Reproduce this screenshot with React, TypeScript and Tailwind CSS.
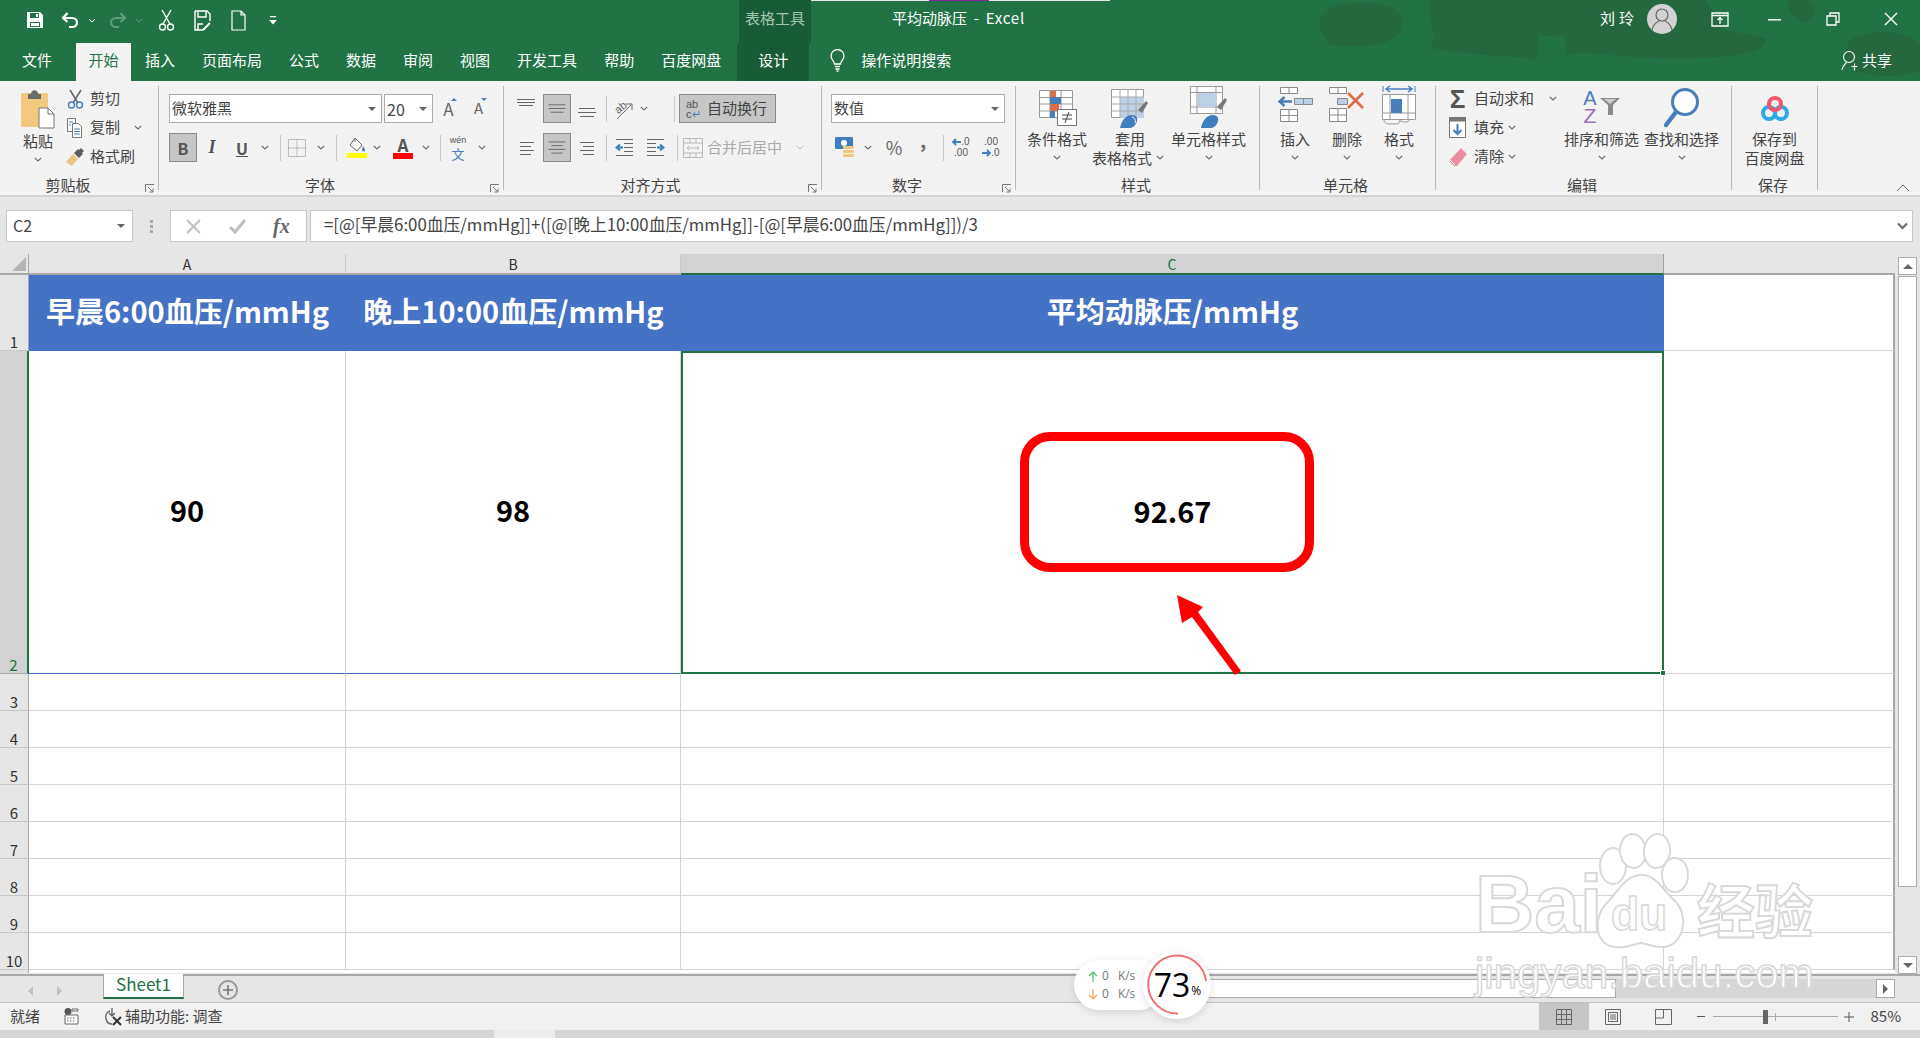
import React from "react";

const F = "font-['Noto_Sans_CJK_SC',sans-serif]";

function Chev({ className = "" }: { className?: string }) {
  return (
    <span className={"flex items-center justify-center " + className}>
      <svg width="8" height="5" viewBox="0 0 8 5" fill="none" stroke="#666" strokeWidth="1.1"><path d="M.8.8 4 4 7.2.8" /></svg>
    </span>
  );
}

function Launcher() {
  return (
    <svg className="absolute right-[3px] bottom-[1px]" width="10" height="10" viewBox="0 0 10 10" fill="none" stroke="#777" strokeWidth="1">
      <path d="M.5 8V.5H9M3 3l5 5M8 4.5V8H4.5" />
    </svg>
  );
}

function Sep() { return <div className="w-px my-[5px] bg-[#b8b8b8] shrink-0" />; }
function MiniSep({ className = "" }: { className?: string }) {
  return <span className={"flex justify-center " + className}><span className="block w-px h-[26px] bg-[#c8c8c8]" /></span>;
}

function Group({ className, label, labelClass, launcher, children }: { className: string; label: string; labelClass: string; launcher?: boolean; children: React.ReactNode }) {
  return (
    <div className={"relative flex flex-col shrink-0 " + className}>
      <div className="h-[95px] flex">{children}</div>
      <div className={"h-[20px] leading-[20px] text-center text-[15px] text-[#444] " + labelClass}>{label}</div>
      {launcher && <Launcher />}
    </div>
  );
}

function Lines({ ls }: { ls: [number, number, number][] }) {
  return (
    <svg width="28" height="29" viewBox="0 0 28 29" stroke="#666" strokeWidth="1">
      {ls.map((l, i) => <line key={i} x1={l[0]} x2={l[1]} y1={l[2] + 0.5} y2={l[2] + 0.5} />)}
    </svg>
  );
}

function Big({ className, icon, l1, l2, chevInline }: { className: string; icon: React.ReactNode; l1: string; l2?: string; chevInline?: boolean }) {
  return (
    <div className={"flex flex-col items-center shrink-0 " + className}>
      <div className="h-[44px] mt-[4px] flex items-start justify-center">{icon}</div>
      <div className="h-[19px] leading-[19px] text-[15px] text-[#444] whitespace-nowrap">{l1}</div>
      {l2 ? (
        <div className="h-[19px] leading-[19px] text-[15px] text-[#444] whitespace-nowrap flex items-center">{l2}{chevInline && <Chev className="w-[16px]" />}</div>
      ) : (
        <Chev className="h-[19px] w-[16px]" />
      )}
    </div>
  );
}

function SmallRow({ icon, text, chev, iconBox }: { icon: React.ReactNode; text: string; chev?: string; iconBox: string }) {
  return (
    <div className="h-[29px] flex items-center">
      <span className={"flex items-center justify-center shrink-0 " + iconBox}>{icon}</span>
      <span className="text-[15px] text-[#444] whitespace-nowrap">{text}</span>
      {chev && <Chev className={chev} />}
    </div>
  );
}

function ColorScissors() {
  return (
    <svg width="17" height="20" viewBox="0 0 17 20" fill="none">
      <path d="M3 1l8 13M14 1 6 14" stroke="#6b6b6b" strokeWidth="1.6" />
      <circle cx="4.5" cy="16" r="3" stroke="#4a7ebb" strokeWidth="1.4" />
      <circle cx="12.5" cy="16" r="3" stroke="#4a7ebb" strokeWidth="1.4" />
    </svg>
  );
}
function CopyIcon() {
  return (
    <svg width="18" height="20" viewBox="0 0 18 20" fill="#fff" stroke="#777">
      <path d="M1.5.5h8v13h-8z" /><path d="M6.5 5.5h6l3 3v11h-9z" />
      <path d="M3 4h4M3 7h2M8 11h6M8 13.5h6M8 16h6" stroke="#4a7ebb" fill="none" />
    </svg>
  );
}
function BrushIcon() {
  return (
    <svg width="20" height="20" viewBox="0 0 20 20">
      <path d="M1 15 8 7l5 5-6 7z" fill="#e8c48a" />
      <path d="M9 6l4-4 1 1 2-2 3 3-2 2 1 1-4 4z" fill="#5f5f5f" />
    </svg>
  );
}

function TitleBlobs() {
  return (
    <svg className="absolute left-0 top-0 pointer-events-none" width="1920" height="81" viewBox="0 0 1920 81" fill="#25683f">
      <path d="M1322 15c8-12 30-13 50-12 22 0 32 10 30 22-2 12-14 18-30 20-16 2-30 2-42 0-6-8-14-18-8-30z" />
      <path d="M1430 0h107c2 12 2 30 0 60-22-4-34-3-60-6-18-2-38-2-47-8 6-8 4-12 2-20-2-10-2-18-2-26z" />
      <path d="M1510 0h60c-2 14 2 30-4 36-20 2-40-4-56-6z" />
      <path d="M1566 0h140l20 30 40 8c2 6-6 14-30 17-40 6-90 4-125 0-18-2-30-2-45-1-2-18-2-34 0-54z" />
      <path d="M1790 0h20c10 10 6 20-6 22-10-4-20-14-14-22zM1846 50c2-14 18-18 36-18 18 0 32 6 38 12v26c-20 10-60 6-68-2-6-6-8-12-6-18z" />
    </svg>
  );
}

function Titlebar() {
  return (
    <div className="relative h-[81px] bg-[#217346] text-white shrink-0 overflow-hidden">
      <TitleBlobs />
      <div className="absolute left-[810px] top-0 w-[300px] h-px bg-[#e8e8e8]" />
      <div className="absolute left-[929px] top-0 w-[60px] h-px bg-[#7b2b9c]" />
      <div className="relative h-[43px] flex">
        <div className="flex items-center h-[40px] pl-[26px]">
          <svg width="18" height="18" viewBox="0 0 18 18" fill="#fff"><path d="M1 1h13l3 3v13H1z" /><path d="M4 2h9v5H4zM4 11h10v5H4z" fill="#217346" /><path d="M10 3h2v3h-2zM5 12h8v3H5z" fill="#fff" /></svg>
          <svg className="ml-[17px]" width="18" height="16" viewBox="0 0 18 16" fill="none" stroke="#fff" strokeWidth="2.2"><path d="M2 6h9c3 0 5 2 5 4.500S14 15 11 15H8" /><path d="M6.500 1 2 6l4.500 4" /></svg>
          <svg className="ml-[9px]" width="8" height="5" viewBox="0 0 8 5" fill="none" stroke="#fff"><path d="M1 1l3 3 3-3" /></svg>
          <svg className="ml-[13px]" width="18" height="16" viewBox="0 0 18 16" fill="none" stroke="#5e9c7d" strokeWidth="2.2"><path d="M16 6H7c-3 0-5 2-5 4.500S4 15 7 15h3" /><path d="M11.500 1 16 6l-4.500 4" /></svg>
          <svg className="ml-[8px]" width="8" height="5" viewBox="0 0 8 5" fill="none" stroke="#5e9c7d"><path d="M1 1l3 3 3-3" /></svg>
          <svg className="ml-[15px]" width="17" height="22" viewBox="0 0 17 22" fill="none" stroke="#fff" strokeWidth="1.4"><path d="M4 1l8 14M13 1 5 15" /><circle cx="4.500" cy="18" r="3" /><circle cx="12.500" cy="18" r="3" /></svg>
          <svg className="ml-[19px]" width="17" height="21" viewBox="0 0 17 21" fill="none" stroke="#fff" strokeWidth="1.4"><path d="M1 1h12l3 3v7M9 20H1V1M4 2v5h8V2M4 20v-6h5" /><path d="M9 20l7-7" strokeWidth="2" /></svg>
          <svg className="ml-[20px]" width="15" height="21" viewBox="0 0 15 21" fill="none" stroke="#fff" strokeWidth="1.2"><path d="M1 1h9l4 4v15H1zM10 1v4h4" /></svg>
          <svg className="ml-[23px]" width="8" height="9" viewBox="0 0 8 9" fill="#fff"><path d="M1 0h6v1.300H1zM0 4h8L4 8.500z" /></svg>
        </div>
        <div className="ml-[462px] w-[72px] bg-[#185c37] flex items-start justify-center pt-[8px] text-[15px] leading-[20px] text-[#a3c7b3]">表格工具</div>
        <div className="ml-[81px] pt-[8px] text-[15px] leading-[20px] whitespace-pre">平均动脉压  -  <span className="tracking-[0.8px]">Excel</span></div>
        <div className="ml-auto flex items-start">
          <span className="text-[15px] leading-[20px] pt-[8px] tracking-[4px]">刘玲</span>
          <span className="ml-[9px] mt-[4px] w-[30px] h-[30px] rounded-full bg-[#d2d2d2] flex items-center justify-center">
            <svg width="22" height="24" viewBox="0 0 22 24" fill="none" stroke="#666" strokeWidth="1.2"><circle cx="11" cy="8" r="6" /><path d="M1 23c1-6 5-8 7-9M21 23c-1-6-5-8-7-9" /></svg>
          </span>
          <svg className="ml-[34px] mt-[12px]" width="18" height="15" viewBox="0 0 18 15" fill="none" stroke="#fff" strokeWidth="1.300"><path d="M1 1h16v13H1zM1 3.500h16M9 12V6M6.500 8 9 5.500 11.500 8" /></svg>
          <svg className="ml-[39px] mt-[19px]" width="13" height="2" viewBox="0 0 13 2" fill="#fff"><path d="M0 0h13v1.500H0z" /></svg>
          <svg className="ml-[45px] mt-[12px]" width="14" height="14" viewBox="0 0 14 14" fill="none" stroke="#fff" strokeWidth="1.300"><path d="M1 4h9v9H1zM4 4V1h9v9h-3" /></svg>
          <svg className="ml-[44px] mr-[22px] mt-[12px]" width="14" height="14" viewBox="0 0 14 14" fill="none" stroke="#fff" strokeWidth="1.400"><path d="M1 1l12 12M13 1 1 13" /></svg>
        </div>
      </div>
      <div className="relative h-[38px] flex items-stretch text-[15px]">
        <div className="pl-[22px] pb-[3px] flex items-center whitespace-nowrap">文件</div>
        <div className="ml-[24px] w-[55px] pb-[3px] bg-[#f3f3f3] text-[#217346] flex items-center justify-center">开始</div>
        <div className="ml-[14px] pb-[3px] flex items-center">插入</div>
        <div className="ml-[27px] pb-[3px] flex items-center">页面布局</div>
        <div className="ml-[27px] pb-[3px] flex items-center">公式</div>
        <div className="ml-[27px] pb-[3px] flex items-center">数据</div>
        <div className="ml-[27px] pb-[3px] flex items-center">审阅</div>
        <div className="ml-[27px] pb-[3px] flex items-center">视图</div>
        <div className="ml-[27px] pb-[3px] flex items-center">开发工具</div>
        <div className="ml-[27px] pb-[3px] flex items-center">帮助</div>
        <div className="ml-[27px] pb-[3px] flex items-center">百度网盘</div>
        <div className="ml-[16px] w-[72px] pb-[3px] bg-[#185c37] flex items-center justify-center">设计</div>
        <div className="ml-[21px] pb-[3px] flex items-center">
          <svg width="15" height="23" viewBox="0 0 15 23" fill="none" stroke="#fff" strokeWidth="1.3"><path d="M4.500 15c0-3-3.500-4-3.500-8a6.500 6.500 0 0 1 13 0c0 4-3.500 5-3.500 8zM5 17.500h5M5.500 20h4M6.500 22h2" /></svg>
        </div>
        <div className="ml-[16px] pb-[3px] flex items-center">操作说明搜索</div>
        <div className="ml-auto mr-[28px] pb-[3px] flex items-center">
          <svg className="mr-[4px]" width="17" height="22" viewBox="0 0 17 22" fill="none" stroke="#fff" strokeWidth="1.100"><circle cx="8" cy="7" r="5.500" /><path d="M1 20c.5-4 3-6 4.500-7.500M10.500 16.500h6M13.500 13.500v7" /></svg>
          共享
        </div>
      </div>
    </div>
  );
}

function ClipboardG() {
  return (
    <Group className="w-[158px]" label="剪贴板" labelClass="pr-[22px]" launcher>
      <div className="w-[63px] pl-[13px] flex flex-col items-center">
        <svg className="mt-[8px]" width="36" height="40" viewBox="0 0 36 40">
          <rect x="1" y="4" width="27" height="34" rx="1" fill="#f0c97f" />
          <path d="M8 5h3c0-5 7-5 7 0h3v5H8z" fill="#6b6b6b" />
          <path d="M19 19h9l6 6v14H19z" fill="#fff" stroke="#777" />
          <path d="M28 19v6h6" fill="none" stroke="#777" />
        </svg>
        <span className="text-[15px] leading-[19px] text-[#444] mt-[2px]">粘贴</span>
        <Chev className="h-[19px] w-[16px]" />
      </div>
      <div className="pt-[3px]">
        <SmallRow icon={<ColorScissors />} text="剪切" iconBox="w-[24px] mr-[3px]" />
        <SmallRow icon={<CopyIcon />} text="复制" iconBox="w-[24px] mr-[3px]" chev="w-[8px] ml-[14px]" />
        <SmallRow icon={<BrushIcon />} text="格式刷" iconBox="w-[24px] mr-[3px]" />
      </div>
    </Group>
  );
}

function FontG() {
  return (
    <Group className="w-[344px] pl-[10px]" label="字体" labelClass="pr-[32px]" launcher>
      <div className="pt-[13px] flex flex-col gap-[10px] text-[#444]">
        <div className="h-[29px] flex">
          <div className="w-[213px] bg-white border border-[#ababab] flex items-center pl-[2px] pr-[5px] text-[15px] justify-between">微软雅黑<span className="w-0 h-0 border-x-[4px] border-x-transparent border-t-[4px] border-t-[#666]" /></div>
          <div className="w-[49px] ml-[2px] bg-white border border-[#ababab] flex items-center pl-[2px] pr-[5px] text-[16px] justify-between">20<span className="w-0 h-0 border-x-[4px] border-x-transparent border-t-[4px] border-t-[#666]" /></div>
          <div className="w-[29px] ml-px relative flex items-center justify-center text-[17px] text-[#666]">A<span className="absolute top-[4px] right-[6px] w-0 h-0 border-x-[3px] border-x-transparent border-b-[3px] border-b-[#4a7ebb]" /></div>
          <div className="w-[29px] ml-px relative flex items-center justify-center text-[15px] text-[#666]">A<span className="absolute top-[4px] right-[6px] w-0 h-0 border-x-[3px] border-x-transparent border-t-[3px] border-t-[#4a7ebb]" /></div>
        </div>
        <div className="h-[29px] flex items-center">
          <div className="w-[28px] h-[29px] bg-[#c6c6c6] border border-[#8a8a8a] flex items-center justify-center font-bold text-[16px] text-[#555]">B</div>
          <div className="w-[30px] flex justify-center font-bold italic text-[18px] text-[#555] font-['Liberation_Serif',serif]">I</div>
          <div className="w-[30px] flex justify-center font-bold underline text-[16px] text-[#555]">U</div>
          <Chev className="w-[16px]" />
          <MiniSep className="w-[14px]" />
          <div className="w-[20px] flex justify-center">
            <svg width="18" height="18" viewBox="0 0 18 18" fill="none" stroke="#888" strokeDasharray="1 1"><path d="M.5.500h17v17H.5zM.5 9h17M9 .500v17" /></svg>
          </div>
          <Chev className="w-[16px] ml-[6px]" />
          <MiniSep className="w-[14px]" />
          <div className="w-[28px] flex flex-col items-center">
            <svg width="18" height="16" viewBox="0 0 18 16" fill="none" stroke="#666"><path d="M7 1l7 7-5 6-7-6z" fill="#fff" /><path d="M7 1V5" /><path d="M15 9c1 2 2 3 2 4a1.500 1.500 0 0 1-3 0c0-1 .5-2 1-4z" fill="#4a7ebb" stroke="none" /></svg>
            <span className="block w-[20px] h-[5px] bg-[#ffff00]" />
          </div>
          <Chev className="w-[12px]" />
          <div className="w-[28px] ml-[6px] flex flex-col items-center">
            <span className="text-[17px] leading-[16px] text-[#555] font-bold">A</span>
            <span className="block w-[20px] h-[6px] bg-[#ff0000]" />
          </div>
          <Chev className="w-[14px] ml-[2px]" />
          <MiniSep className="w-[14px]" />
          <div className="w-[22px] flex flex-col items-center text-[#4a7ebb] font-['Liberation_Sans',sans-serif]">
            <span className="text-[9px] leading-[11px] text-[#555]">wén</span>
            <span className="text-[13px] leading-[15px] font-['Noto_Sans_CJK_SC',sans-serif]">文</span>
          </div>
          <Chev className="w-[16px] ml-[5px]" />
        </div>
      </div>
    </Group>
  );
}

function ActiveBtn({ children, className = "" }: { children: React.ReactNode; className?: string }) {
  return <div className={"h-[29px] bg-[#c6c6c6] border border-[#8a8a8a] flex items-center justify-center " + className}>{children}</div>;
}

function Indent({ flip }: { flip?: boolean }) {
  return (
    <svg width="19" height="18" viewBox="0 0 19 18" fill="none" stroke="#666" style={flip ? { transform: "scaleX(-1)" } : undefined}>
      <path d="M1 .5h17M9 4.500h9M9 8.500h9M9 12.500h9M1 16.500h17" />
      <path d="M8 8.500H2M5 5.500l-3.500 3L5 11.500" stroke="#3f7fbf" strokeWidth="2" />
    </svg>
  );
}

function AlignG() {
  return (
    <Group className="w-[317px] pl-[9px]" label="对齐方式" labelClass="pr-[33px]" launcher>
      <div className="pt-[13px] flex flex-col gap-[10px] text-[#444]">
        <div className="h-[29px] flex items-center">
          <span className="w-[28px] block"><Lines ls={[[4, 22, 5], [4, 22, 8], [6, 20, 11]]} /></span>
          <ActiveBtn className="w-[28px] ml-[2px]"><Lines ls={[[5, 23, 10], [5, 23, 14], [7, 21, 18]]} /></ActiveBtn>
          <span className="w-[28px] ml-[2px] block"><Lines ls={[[6, 22, 14], [5, 23, 18], [7, 21, 22]]} /></span>
          <MiniSep className="w-[10px]" />
          <span className="w-[24px] flex justify-center">
            <svg className="overflow-visible" width="20" height="22" viewBox="0 0 20 22" fill="none"><path d="M4 21 18 7M13 6h6v6" stroke="#666" /><text x="2" y="13" fontSize="11" fill="#666" transform="rotate(-40 8 10)" fontFamily="Liberation Sans">ab</text></svg>
          </span>
          <Chev className="w-[14px] ml-[2px]" />
          <MiniSep className="w-[10px] ml-[18px]" />
          <ActiveBtn className="w-[97px] !justify-start pl-[6px]">
            <span className="w-[16px] flex flex-col text-[11px] text-[#555] font-['Liberation_Sans',sans-serif]"><span className="leading-[10px]">ab</span><span className="leading-[10px]">c<span className="text-[#4a7ebb]">↵</span></span></span>
            <span className="ml-[5px] text-[15px] whitespace-nowrap">自动换行</span>
          </ActiveBtn>
        </div>
        <div className="h-[29px] flex items-center">
          <span className="w-[28px] block"><Lines ls={[[7, 21, 9], [7, 18, 13], [7, 21, 17], [7, 18, 21]]} /></span>
          <ActiveBtn className="w-[28px] ml-[2px]"><Lines ls={[[5, 23, 8], [8, 20, 12], [5, 23, 16], [8, 20, 20]]} /></ActiveBtn>
          <span className="w-[28px] ml-[2px] block"><Lines ls={[[7, 21, 9], [10, 21, 13], [7, 21, 17], [10, 21, 21]]} /></span>
          <MiniSep className="w-[10px]" />
          <span className="w-[27px] flex justify-center"><Indent /></span>
          <span className="w-[28px] ml-[3px] flex justify-center"><Indent flip /></span>
          <MiniSep className="w-[10px] ml-[3px]" />
          <svg className="ml-px" width="20" height="20" viewBox="0 0 20 20" fill="#f3f3f3" stroke="#bbb"><path d="M.5.500h19v19H.5zM.5 5h19M.5 15h19M7 .500V5M13 .500V5M7 15v4.500M13 15v4.500" /><path d="M4 10h12M6 8l-2 2 2 2M14 8l2 2-2 2" fill="none" /></svg>
          <span className="ml-[4px] text-[15px] text-[#aaa] whitespace-nowrap">合并后居中</span>
          <svg className="ml-[14px]" width="8" height="5" viewBox="0 0 8 5" fill="none" stroke="#bbb"><path d="M.8.8 4 4 7.2.8" /></svg>
        </div>
      </div>
    </Group>
  );
}

function DecIcon({ inc }: { inc?: boolean }) {
  return (
    <span className="w-[26px] flex flex-col items-center text-[10px] leading-[10px] text-[#555] font-['Liberation_Sans',sans-serif]">
      <span className="flex items-center h-[11px]">{!inc && <svg width="9" height="8" viewBox="0 0 9 8" fill="none" stroke="#3f7fbf" strokeWidth="1.800"><path d="M9 4H1M4 1 1 4l3 3" /></svg>}{inc ? ".00" : ".0"}</span>
      <span className="flex items-center h-[11px]">{inc && <svg width="9" height="8" viewBox="0 0 9 8" fill="none" stroke="#3f7fbf" strokeWidth="1.800"><path d="M0 4h8M5 1l3 3-3 3" /></svg>}{inc ? ".0" : ".00"}</span>
    </span>
  );
}

function NumberG() {
  return (
    <Group className="w-[193px] pl-[9px]" label="数字" labelClass="pr-[32px]" launcher>
      <div className="pt-[13px] flex flex-col gap-[10px] text-[#444]">
        <div className="w-[174px] h-[29px] bg-white border border-[#ababab] flex items-center justify-between pl-[2px] pr-[5px] text-[15px]">数值<span className="w-0 h-0 border-x-[4px] border-x-transparent border-t-[4px] border-t-[#666]" /></div>
        <div className="h-[29px] flex items-center">
          <span className="w-[28px] flex justify-center">
            <svg width="20" height="21" viewBox="0 0 20 21"><rect x="0" y="0" width="18" height="12" rx="1" fill="#3f7fbf" /><circle cx="9" cy="6" r="3" fill="#fff" /><rect x="8" y="9" width="11" height="3" rx="1" fill="#f0c97f" /><rect x="8" y="13" width="11" height="3" rx="1" fill="#f0c97f" /><rect x="8" y="17" width="11" height="3" rx="1" fill="#f0c97f" /></svg>
          </span>
          <Chev className="w-[16px] ml-px" />
          <span className="w-[28px] ml-[4px] text-center text-[18px] text-[#666]">%</span>
          <span className="w-[28px] ml-px text-center text-[19px] font-bold leading-[14px] text-[#666] pb-[16px]">,</span>
          <MiniSep className="w-[10px] ml-px" />
          <DecIcon />
          <span className="ml-[4px]"><DecIcon inc /></span>
        </div>
      </div>
    </Group>
  );
}

function CondIcon() {
  return (
    <svg className="mt-[5px] ml-[2px]" width="38" height="36" viewBox="0 0 38 36">
      <path d="M.5.500h33v27H.5zM.5 7.500h33M.5 14h33M.5 21h33M11 .500v27M22 .500v27" fill="#fff" stroke="#999" />
      <path d="M11 1h6v6h-6zM11 14h9v7h-9z" fill="#dd6b47" />
      <path d="M11 7h11v7H11zM11 21h5v7h-5z" fill="#4a7ebb" />
      <rect x="18.500" y="19.500" width="19" height="16" fill="#fff" stroke="#777" />
      <path d="M23 25h10M23 29h10M30 22l-4 11" stroke="#444" fill="none" />
    </svg>
  );
}
function TableStyleIcon() {
  return (
    <svg className="mt-[4px]" width="38" height="40" viewBox="0 0 38 40">
      <path d="M.5.500h32v28H.5z" fill="#fff" stroke="#999" />
      <path d="M9 8h24v21H9z" fill="#bcd0e6" />
      <path d="M.5 8h32M.5 15h32M.5 22h32M9 .500v28M17 .500v28M25 .500v28" stroke="#aaa" fill="none" />
      <path d="M27 21l8-9 2 2-6 10z" fill="#777" />
      <path d="M9 39c1-6 5-13 12-13 4 0 6 3 5 6-1 4-4 7-7 7z" fill="#3f7fbf" />
      <path d="M21 28c3 1 4 3 3 6" fill="none" stroke="#fff" />
    </svg>
  );
}
function CellStyleIcon() {
  return (
    <svg className="mt-[1px]" width="38" height="43" viewBox="0 0 38 43">
      <path d="M.5.500h32v27H.5zM.5 6.500h32M7 .500v27M26 .500v27M.5 21h32" fill="#fff" stroke="#999" />
      <path d="M7.500 7h18v14h-18z" fill="#bcd0e6" />
      <path d="M27 21l8-9 2 2-6 10z" fill="#777" />
      <path d="M11 42c1-6 5-13 12-13 4 0 6 3 5 6-1 4-4 7-7 7z" fill="#3f7fbf" />
    </svg>
  );
}
function InsertIcon() {
  return (
    <svg className="mt-[2px]" width="36" height="36" viewBox="0 0 36 36" fill="#fff" stroke="#888">
      <path d="M3.500.500h17v6h-17zM12 .500v6M3.500 22.500h17v12h-17zM3.500 28.500h17M12 22.500v12" />
      <path d="M17.500 11.500h18v6h-18zM26.500 11.500v6" fill="#bcd0e6" />
      <path d="M15 14.500H3M7.500 10l-5 4.500 5 4.500" stroke="#4a7ebb" strokeWidth="2.400" fill="none" />
    </svg>
  );
}
function DeleteIcon() {
  return (
    <svg className="mt-[2px]" width="36" height="36" viewBox="0 0 36 36" fill="#fff" stroke="#888">
      <path d="M.5.500h17v6H.5zM9 .500v6M.5 21.500h17v13H.5zM.5 28h17M9 21.500v13" />
      <path d="M8.500 11.500h10v6h-10z" fill="#bcd0e6" />
      <path d="M19 6l15 15M34 6 19 21" stroke="#dd6b47" strokeWidth="2.600" fill="none" />
    </svg>
  );
}
function FormatIcon() {
  return (
    <svg width="34" height="40" viewBox="0 0 34 40" fill="#fff" stroke="#999">
      <path d="M1 1v6M33 1v6" stroke="#4a7ebb" fill="none" />
      <path d="M4 4h26M8 1 4 4l4 3M26 1l4 3-4 3" stroke="#4a7ebb" strokeWidth="1.500" fill="none" />
      <path d="M.5 9.500h33v25H.5zM8 9.500v25M26 9.500v25M.5 28h33" />
      <path d="M9 14h11v14H9z" fill="#4a7ebb" stroke="none" />
      <path d="M2 35c0 4 5 4 7 4h5c3 0 4-2 4-4M18 35c0 2 4 2 6 2 2 0 3-1 3-2" fill="none" />
    </svg>
  );
}

function SortIcon() {
  return (
    <div className="flex items-start mt-[5px]">
      <span className="flex flex-col items-center font-medium font-['Liberation_Sans',sans-serif]">
        <span className="text-[#4a7ebb] text-[20px] leading-[17px]">A</span>
        <span className="text-[#9a6fb8] text-[21px] leading-[17px]">Z</span>
      </span>
      <svg className="ml-[3px] mt-[8px]" width="20" height="17" viewBox="0 0 20 17"><path d="M0 0h20l-7 7v10H8V7z" fill="#8a8a8a" /><path d="M4 1h12L10 6z" fill="#cfcfcf" /></svg>
    </div>
  );
}
function FindIcon() {
  return (
    <svg className="mt-[2px]" width="36" height="42" viewBox="0 0 36 42" fill="none">
      <circle cx="21" cy="15" r="12.500" stroke="#4a7ebb" strokeWidth="3" fill="#fff" />
      <path d="M12 25 2 38" stroke="#4a7ebb" strokeWidth="4.500" strokeLinecap="round" />
    </svg>
  );
}
function PanIcon() {
  return (
    <svg className="mt-[11px]" width="28" height="26" viewBox="0 0 28 26" fill="none" strokeWidth="4">
      <circle cx="8" cy="17" r="6" stroke="#2ea9e8" />
      <circle cx="20" cy="17" r="6" stroke="#2ea9e8" />
      <circle cx="14" cy="8" r="6" stroke="#f1566d" />
    </svg>
  );
}

function Ribbon() {
  return (
    <div className={"h-[116px] bg-[#f3f3f3] border-b-2 border-[#d4d4d4] flex shrink-0 relative"}>
      <ClipboardG /><Sep />
      <FontG /><Sep />
      <AlignG /><Sep />
      <NumberG /><Sep />
      <Group className="w-[243px] pl-[11px]" label="样式" labelClass="pr-[14px]">
        <Big className="w-[60px]" icon={<CondIcon />} l1="条件格式" />
        <Big className="w-[76px] ml-[5px]" icon={<TableStyleIcon />} l1="套用" l2="表格格式" chevInline />
        <Big className="w-[75px] ml-[3px]" icon={<CellStyleIcon />} l1="单元格样式" />
      </Group>
      <Sep />
      <Group className="w-[175px] pl-[9px]" label="单元格" labelClass="pr-[13px]">
        <Big className="w-[52px]" icon={<InsertIcon />} l1="插入" />
        <Big className="w-[52px]" icon={<DeleteIcon />} l1="删除" />
        <Big className="w-[52px]" icon={<FormatIcon />} l1="格式" />
      </Group>
      <Sep />
      <Group className="w-[295px] pl-[9px]" label="编辑" labelClass="pr-[12px]">
        <div className="w-[119px] pt-[3px]">
          <SmallRow icon={<span className="text-[26px] leading-none text-[#555] font-bold font-['Liberation_Sans',sans-serif]">Σ</span>} text="自动求和" iconBox="w-[25px] mr-[4px]" chev="w-[8px] ml-[15px]" />
          <SmallRow icon={<svg width="17" height="21" viewBox="0 0 17 21" fill="#fff" stroke="#777"><path d="M.5.500h16v20H.5z" /><path d="M0 0h17v4H0z" fill="#777" /><path d="M8.500 7v10M4.500 13l4 4 4-4" stroke="#3f7fbf" strokeWidth="2" fill="none" /></svg>} text="填充" iconBox="w-[25px] mr-[4px]" chev="w-[8px] ml-[4px]" />
          <SmallRow icon={<svg width="18" height="18" viewBox="0 0 18 18"><path d="M12 0l6 6-10 12H5l-5-5z" fill="#ea8f9f" /><path d="M1 12l5 5" stroke="#fff" /></svg>} text="清除" iconBox="w-[25px] mr-[4px]" chev="w-[8px] ml-[4px]" />
        </div>
        <Big className="w-[75px]" icon={<SortIcon />} l1="排序和筛选" />
        <Big className="w-[75px] ml-[5px]" icon={<FindIcon />} l1="查找和选择" />
      </Group>
      <Sep />
      <Group className="w-[85px]" label="保存" labelClass="pr-[3px]">
        <Big className="w-[85px]" icon={<PanIcon />} l1="保存到" l2="百度网盘" />
      </Group>
      <Sep />
      <svg className="absolute right-[10px] bottom-[3px]" width="14" height="8" viewBox="0 0 14 8" fill="none" stroke="#666"><path d="M1 7l6-6 6 6" /></svg>
    </div>
  );
}

function FormulaBar() {
  return (
    <div className="h-[57px] bg-[#e6e6e6] pt-[13px] pl-[6px] pr-[7px] flex shrink-0">
      <div className="w-[127px] h-[32px] bg-white border border-[#c6c6c6] flex items-center justify-between pl-[6px] pr-[7px] text-[16px] text-[#444]"><span className="pb-[2px]">C2</span><span className="w-0 h-0 border-x-[4px] border-x-transparent border-t-[4px] border-t-[#666]" /></div>
      <div className="w-[37px] h-[32px] flex flex-col items-center justify-center gap-[2px]">
        <span className="block w-[3px] h-[3px] bg-[#aaa]" /><span className="block w-[3px] h-[3px] bg-[#aaa]" /><span className="block w-[3px] h-[3px] bg-[#aaa]" />
      </div>
      <div className="w-[137px] h-[32px] bg-white border border-[#c6c6c6] flex items-center">
        <svg className="ml-[15px]" width="15" height="15" viewBox="0 0 15 15" fill="none" stroke="#c0c0c0" strokeWidth="2"><path d="M1 1l13 13M14 1 1 14" /></svg>
        <svg className="ml-[28px]" width="17" height="15" viewBox="0 0 17 15" fill="none" stroke="#c0c0c0" strokeWidth="3"><path d="M1 8l5 5L16 1" /></svg>
        <span className="ml-[27px] italic font-bold text-[20px] text-[#666] font-['Liberation_Serif',serif]">fx</span>
      </div>
      <div className="ml-[3px] flex-1 h-[32px] bg-white border border-[#c6c6c6] flex items-center justify-between pl-[13px] pr-[4px] text-[16.8px] text-[#444]">
        <span className="whitespace-nowrap pb-[2px]">=[@[早晨6:00血压/mmHg]]+([@[晚上10:00血压/mmHg]]-[@[早晨6:00血压/mmHg]])/3</span>
        <svg width="11" height="8" viewBox="0 0 11 8" fill="none" stroke="#666" strokeWidth="2"><path d="M1 1.500 5.500 6 10 1.500" /></svg>
      </div>
    </div>
  );
}

const rowNums = [3, 4, 5, 6, 7, 8, 9, 10];

function ColHead({ t, sel }: { t: string; sel?: boolean }) {
  return (
    <div className={sel
      ? "bg-[#d2d2d2] border-b-2 border-[#217346] border-r border-r-[#9f9f9f] text-[#217346] text-[14px] leading-[18px] flex items-end justify-center"
      : "bg-[#e6e6e6] border-b-2 border-[#a8a8a8] border-r border-r-[#c8c8c8] text-[#333] text-[14px] leading-[18px] flex items-end justify-center"}>{t}</div>
  );
}
function RowHead({ t, sel }: { t: number; sel?: boolean }) {
  return (
    <div className={sel
      ? "bg-[#d2d2d2] border-r-2 border-[#217346] border-b border-b-[#a8a8a8] text-[15px] leading-[16px] text-[#217346] flex items-end justify-center"
      : "bg-[#e6e6e6] border-r border-[#a8a8a8] border-b border-b-[#c8c8c8] text-[15px] leading-[16px] text-[#333] flex items-end justify-center"}>{t}</div>
  );
}

function Sheet() {
  const blank = "bg-white border-r border-b border-[#d4d4d4]";
  return (
    <div className="h-[720px] flex shrink-0 bg-[#e6e6e6]">
      <div className="w-[1895px] grid grid-cols-[29px_317px_335px_983px_231px] grid-rows-[21px_76px_323px_repeat(8,37px)_3px]">
        <div className="bg-[#e6e6e6] border-b-2 border-r border-[#a8a8a8] flex items-end justify-end">
          <span className="w-0 h-0 border-l-[14px] border-l-transparent border-b-[14px] border-b-[#b5b5b5] mr-[2px] mb-[2px]" />
        </div>
        <ColHead t="A" /><ColHead t="B" /><ColHead t="C" sel />
        <div className="border-b-2 border-[#a8a8a8]" />

        <RowHead t={1} />
        <div className="bg-[#4472c4] text-white font-bold text-[29px] pb-[4px] flex items-center justify-center whitespace-nowrap">早晨6:00血压/mmHg</div>
        <div className="bg-[#4472c4] text-white font-bold text-[29px] pb-[4px] flex items-center justify-center whitespace-nowrap">晚上10:00血压/mmHg</div>
        <div className="bg-[#4472c4] text-white font-bold text-[29px] pb-[4px] flex items-center justify-center whitespace-nowrap">平均动脉压/mmHg</div>
        <div className={blank + " border-r-2 border-r-[#a8a8a8]"} />

        <RowHead t={2} sel />
        <div className="bg-white border-r border-r-[#d4d4d4] border-b border-b-[#4472c4] font-bold text-[29px] text-black pb-[4px] flex items-center justify-center">90</div>
        <div className="bg-white border-r border-r-[#d4d4d4] border-b border-b-[#4472c4] font-bold text-[29px] text-black pb-[4px] flex items-center justify-center">98</div>
        <div className="relative bg-white border-2 border-[#217346] font-bold text-[29px] text-black pb-[4px] flex items-center justify-center">
          92.67
          <span className="absolute -right-[4px] -bottom-[4px] w-[6px] h-[6px] bg-[#217346] border border-white" />
        </div>
        <div className={blank + " border-r-2 border-r-[#a8a8a8]"} />

        {rowNums.map((n) => (
          <React.Fragment key={n}>
            <RowHead t={n} />
            <div className={blank} /><div className={blank} /><div className={blank} />
            <div className={blank + " border-r-2 border-r-[#a8a8a8]"} />
          </React.Fragment>
        ))}
        <div className="bg-[#e6e6e6] border-r border-[#a8a8a8]" />
        <div className="bg-white" /><div className="bg-white" /><div className="bg-white" /><div className="bg-white" />
      </div>
      <div className="flex-1 flex flex-col px-[3px] pt-[3px] pb-[0px]">
        <div className="h-[18px] bg-white border border-[#ababab] flex items-center justify-center"><span className="w-0 h-0 border-x-[5px] border-x-transparent border-b-[5px] border-b-[#666]" /></div>
        <div className="h-[611px] mt-px bg-white border border-[#ababab]" />
        <div className="flex-1" />
        <div className="h-[18px] bg-white border border-[#ababab] flex items-center justify-center"><span className="w-0 h-0 border-x-[5px] border-x-transparent border-t-[5px] border-t-[#666]" /></div>
      </div>
    </div>
  );
}

function SheetTabs() {
  return (
    <div className="h-[29px] bg-[#e6e6e6] border-t-2 border-[#a8a8a8] border-b border-b-[#c0c0c0] flex shrink-0">
      <span className="ml-[28px] mt-[10px] w-0 h-0 border-y-[5px] border-y-transparent border-r-[5px] border-r-[#c0c0c0]" />
      <span className="ml-[24px] mt-[10px] w-0 h-0 border-y-[5px] border-y-transparent border-l-[5px] border-l-[#c0c0c0]" />
      <div className="ml-[41px] w-[81px] h-[25px] -mt-[2px] bg-white border-x border-[#a8a8a8] border-b-2 border-b-[#217346] text-[#217346] text-[17px] leading-[20px] text-center">Sheet1</div>
      <span className="ml-[34px] mt-[4px] w-[20px] h-[20px] rounded-full border-2 border-[#999] flex items-center justify-center text-[#777]">
        <svg width="10" height="10" viewBox="0 0 10 10" stroke="#777" strokeWidth="1.600"><path d="M5 0v10M0 5h10" /></svg>
      </span>
      <div className="ml-auto w-[776px] h-[19px] mt-[3px] bg-[#d6d6d6]">
        <div className="w-[516px] h-full bg-white border border-[#ababab]" />
      </div>
      <div className="w-[19px] h-[19px] mt-[3px] mr-[25px] bg-white border border-[#ababab] flex items-center justify-center"><span className="w-0 h-0 border-y-[5px] border-y-transparent border-l-[5px] border-l-[#666]" /></div>
    </div>
  );
}

function StatusBar() {
  return (
    <div className="h-[27px] bg-[#f1f1f1] flex items-center shrink-0 text-[15px] text-[#444]">
      <span className="ml-[10px]">就绪</span>
      <svg className="ml-[24px]" width="15" height="17" viewBox="0 0 15 17"><circle cx="4" cy="3.500" r="3.500" fill="#555" /><path d="M8 1h6v2H8zM1 7h13v9H1z" fill="#fff" stroke="#666" /><path d="M3 10h9M3 13h9" stroke="#666" strokeDasharray="1.500 1.500" /></svg>
      <svg className="ml-[24px]" width="20" height="20" viewBox="0 0 20 20" fill="none" stroke="#666" strokeWidth="1.400"><path d="M7 4c-3 1-5 4-4 8s4 5 6 5M9 1v7M6 6l3 3 3-3" /><path d="M10 10l8 8M18 10l-8 8" stroke="#333" strokeWidth="2" /></svg>
      <span className="ml-[2px] whitespace-nowrap">辅助功能: 调查</span>
      <div className="ml-auto h-full w-[50px] bg-[#c6c6c6] flex items-center justify-center">
        <svg width="16" height="16" viewBox="0 0 16 16" fill="none" stroke="#666"><path d="M.5.500h15v15H.5zM.5 5.500h15M.5 10.500h15M5.500.500v15M10.500.500v15" /></svg>
      </div>
      <svg className="ml-[16px]" width="16" height="16" viewBox="0 0 16 16" fill="none" stroke="#666"><path d="M.5.500h15v15H.5zM3.500 3.500h9v9h-9zM5 6h6M5 8h6M5 10h6" /></svg>
      <svg className="ml-[34px]" width="17" height="16" viewBox="0 0 17 16" fill="none" stroke="#666"><path d="M.5.500h16v15H.5zM8.500.500V9H.5" /></svg>
      <span className="ml-[25px] block w-[8px] h-[1.5px] bg-[#555]" />
      <div className="ml-[8px] w-[125px] h-[14px] relative flex items-center">
        <span className="block w-full h-px bg-[#aaa]" />
        <span className="absolute left-[50px] top-0 w-[5px] h-[14px] bg-[#666]" />
        <span className="absolute left-[62px] top-[3px] w-px h-[8px] bg-[#aaa]" />
      </div>
      <svg className="ml-[6px]" width="10" height="10" viewBox="0 0 10 10" stroke="#555"><path d="M5 0v10M0 5h10" /></svg>
      <span className="ml-[17px] mr-[19px]">85%</span>
    </div>
  );
}

function Overlays() {
  return (
    <>
      <div className="absolute left-[1020px] top-[432px] w-[294px] h-[140px] border-[9px] border-[#ff0000] rounded-[30px]" />
      <svg className="absolute left-[1170px] top-[590px]" width="80" height="90" viewBox="1170 590 80 90">
        <path d="M1177 595l26 12-5 5 43 59-6 4-43-58-10 6z" fill="#ff0000" />
      </svg>
      <div className="absolute left-[1475px] top-[833px] w-[345px] h-[165px] pointer-events-none text-white font-['Liberation_Sans',sans-serif]">
        <svg className="absolute left-[112px] top-0" width="112" height="120" viewBox="0 0 112 120" fill="#fff" stroke="#d9d9d9" strokeWidth="2">
          <ellipse cx="26" cy="33" rx="13" ry="18" />
          <ellipse cx="46" cy="18" rx="13" ry="17" transform="rotate(-6 46 18)" />
          <ellipse cx="70" cy="18" rx="13" ry="17" transform="rotate(6 70 18)" />
          <ellipse cx="88" cy="42" rx="13" ry="17" />
          <path d="M55 42c14 0 20 14 33 26 14 14 10 44-12 46-10 1-16-4-22-4s-14 6-26 4C8 112 6 86 18 72c14-14 20-30 37-30z" />
        </svg>
        <span className="absolute left-[136px] top-[56px] font-bold text-[46px] leading-[50px] [-webkit-text-stroke:1.500px_#d9d9d9]">du</span>
        <span className="absolute left-0 top-[26px] font-bold text-[82px] leading-[90px] [-webkit-text-stroke:2px_#d9d9d9]">Bai</span>
        <span className="absolute left-[222px] top-[40px] font-['Noto_Sans_CJK_SC',sans-serif] font-bold text-[58px] leading-[70px] [-webkit-text-stroke:2px_#d9d9d9] whitespace-nowrap">经验</span>
        <span className="absolute left-0 top-[116px] text-[42px] leading-[50px] [-webkit-text-stroke:1.500px_#d9d9d9] whitespace-nowrap">jingyan.baidu.com</span>
      </div>
      <div className="absolute left-[1074px] top-[960px] w-[90px] h-[50px] rounded-[25px] bg-white shadow-[0_2px_8px_rgba(0,0,0,0.12)] text-[12px] leading-[18px] text-[#777] pl-[14px] pt-[7px] font-['Open_Sans',sans-serif]">
        <div className="flex items-center"><svg width="10" height="11" viewBox="0 0 10 11" fill="none" stroke="#4cc66a" strokeWidth="1.200"><path d="M5 11V1M1 5l4-4 4 4" /></svg><span className="ml-[4px]">0</span><span className="ml-[9px]">K/s</span></div>
        <div className="flex items-center"><svg width="10" height="11" viewBox="0 0 10 11" fill="none" stroke="#f5a04a" strokeWidth="1.200"><path d="M5 0v10M1 6l4 4 4-4" /></svg><span className="ml-[4px]">0</span><span className="ml-[9px]">K/s</span></div>
      </div>
      <div className="absolute left-[1143px] top-[951px] w-[68px] h-[68px] rounded-full bg-white shadow-[0_2px_8px_rgba(0,0,0,0.12)] flex items-center justify-center font-['Open_Sans',sans-serif] text-black">
        <svg className="absolute left-0 top-0" width="68" height="68" viewBox="0 0 68 68" fill="none" stroke="#f26d6d" strokeWidth="2"><path d="M35 62.500A29 29 0 1 1 63 30" /></svg>
        <span className="text-[32px] leading-[34px] ml-[1px]">73</span>
        <span className="text-[12px] mt-[12px] ml-[1px]">%</span>
      </div>
    </>
  );
}

export default function App() {
  return (
    <div className={"relative w-[1920px] h-[1038px] overflow-hidden flex flex-col " + F}>
      <Titlebar />
      <Ribbon />
      <FormulaBar />
      <Sheet />
      <SheetTabs />
      <StatusBar />
      <div className="flex-1 bg-[#d6d6d6] flex">
        <div className="ml-[494px] w-[61px] bg-[#ececec]" />
      </div>
      <Overlays />
    </div>
  );
}
